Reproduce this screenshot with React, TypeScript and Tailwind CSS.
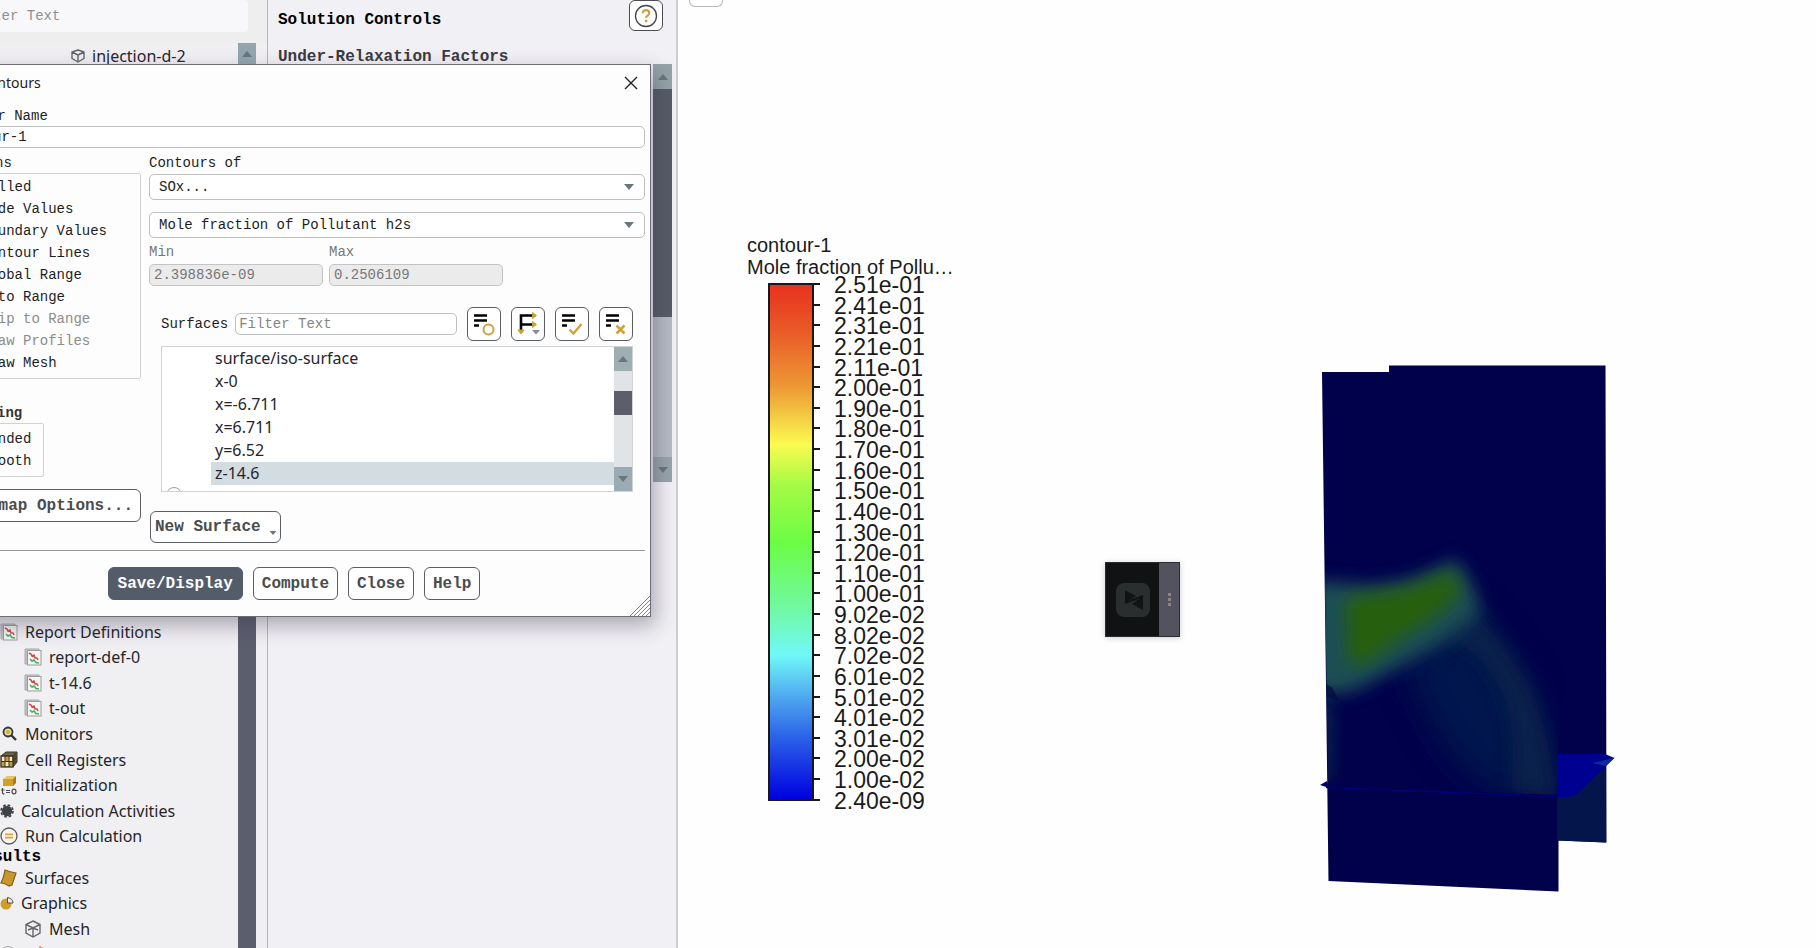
import type { ReactNode } from "react";

const mono = "font-['Liberation_Mono',monospace]";
const sans = "font-['Noto_Sans',sans-serif]";

const options = [
  { label: "Filled", checked: true },
  { label: "Node Values", checked: true },
  { label: "Boundary Values" },
  { label: "Contour Lines" },
  { label: "Global Range", checked: true },
  { label: "Auto Range", checked: true },
  { label: "Clip to Range", disabled: true },
  { label: "Draw Profiles", disabled: true },
  { label: "Draw Mesh" },
];

const surfaces = ["surface/iso-surface", "x-0", "x=-6.711", "x=6.711", "y=6.52", "z-14.6"];

const legend = [
  "2.51e-01", "2.41e-01", "2.31e-01", "2.21e-01", "2.11e-01", "2.00e-01", "1.90e-01",
  "1.80e-01", "1.70e-01", "1.60e-01", "1.50e-01", "1.40e-01", "1.30e-01", "1.20e-01",
  "1.10e-01", "1.00e-01", "9.02e-02", "8.02e-02", "7.02e-02", "6.01e-02", "5.01e-02",
  "4.01e-02", "3.01e-02", "2.00e-02", "1.00e-02", "2.40e-09",
];

function ReportIcon() {
  return (
    <svg viewBox="0 0 18 18" className="h-[18px] w-[18px] shrink-0">
      <path d="M1 1h14v2H3v13H1z" fill="#c9ccce" stroke="#a5a8aa" strokeWidth="1" />
      <rect x="3.5" y="2.5" width="13.5" height="14.5" fill="#f4f4f2" stroke="#9b9ea0" />
      <path d="M5 5l2 1 1 2 2-1 1 3 2 0 1 2" fill="none" stroke="#d2494b" strokeWidth="1.5" />
      <path d="M6 11l2 2 2-1 2 2.500 3 .5" fill="none" stroke="#3fb060" strokeWidth="1.5" />
    </svg>
  );
}

function MonitorIcon() {
  return (
    <svg viewBox="0 0 18 18" className="h-[18px] w-[18px] shrink-0">
      <circle cx="8" cy="7" r="4.500" fill="#e9dc9a" stroke="#333639" strokeWidth="1.800" />
      <circle cx="8" cy="7" r="2" fill="#d3ab35" />
      <path d="M11 10l5 5" stroke="#333639" strokeWidth="2.400" />
    </svg>
  );
}

function CellIcon() {
  return (
    <svg viewBox="0 0 18 18" className="h-[18px] w-[18px] shrink-0">
      <path d="M1 5l5-4h11l-4 4zM13 5l4-4v10l-4 5z" fill="#6c6446" stroke="#36342c" />
      <rect x="1" y="5" width="12" height="11" fill="#c79d2b" stroke="#36342c" strokeWidth="1.300" />
      <path d="M2 6h3v4H2zM9 6h3v4H9zM5 11h4v4H5z" fill="#efe8cc" />
      <path d="M5 5v11M9 5v11M1 10.500h12M15 3v10M13 10l4-4" fill="none" stroke="#36342c" />
    </svg>
  );
}

function InitIcon() {
  return (
    <svg viewBox="0 0 18 20" className="h-5 w-[18px] shrink-0">
      <path d="M3 4l4-3h9l-3 3z" fill="#e7c566" />
      <path d="M3 4h10v7H3z" fill="#d19f2b" />
      <path d="M13 4l3-3v7l-3 3z" fill="#a97c1a" />
      <path d="M2.500 13v5q0 1 2 .8M1 15h3.500M6 15.500h4M6 17.500h4" fill="none" stroke="#4d4d4d" strokeWidth="1.200" />
      <ellipse cx="14" cy="16.500" rx="2" ry="2.300" fill="none" stroke="#4d4d4d" strokeWidth="1.200" />
    </svg>
  );
}

function GearIcon() {
  return (
    <svg viewBox="0 0 14 14" className="h-[14px] w-[14px] shrink-0">
      <circle cx="7" cy="7" r="5.200" fill="#3d4247" />
      <circle cx="7" cy="7" r="6" fill="none" stroke="#3d4247" strokeWidth="1.600" strokeDasharray="2.700 2" />
    </svg>
  );
}

function RunIcon() {
  return (
    <svg viewBox="0 0 18 18" className="h-[18px] w-[18px] shrink-0">
      <circle cx="9" cy="9" r="8" fill="#f5f3ea" stroke="#55585c" strokeWidth="1.300" />
      <path d="M5 7.300h8M5 10.700h8" stroke="#d3a93a" strokeWidth="1.800" />
    </svg>
  );
}

function SurfaceIcon() {
  return (
    <svg viewBox="0 0 18 18" className="h-[18px] w-[18px] shrink-0">
      <path d="M5 1q5 2 11 3-2 6-4 12l-3 1Q5 14 1 14 4 8 5 1z" fill="#c8972b" stroke="#7c6220" strokeWidth="1.200" />
    </svg>
  );
}

function GraphicsIcon() {
  return (
    <svg viewBox="0 0 14 14" className="h-[14px] w-[14px] shrink-0">
      <circle cx="6" cy="8" r="5.500" fill="#cf9c2d" />
      <path d="M7.500 1.500V7H13q0-4.500-5.500-5.500z" fill="#f3eef0" stroke="#5b4a4a" />
    </svg>
  );
}

function MeshIcon({ className }: { className?: string }) {
  return (
    <svg viewBox="0 0 18 18" className={className ?? "h-[18px] w-[18px] shrink-0"}>
      <path
        d="M9 1l7 3.500v8.500l-7 4-7-4V4.500zM2 4.500l7 3.500 7-3.500M9 8v9M4 10l5-2 5 2"
        fill="none"
        stroke="#62666b"
        strokeWidth="1.400"
      />
    </svg>
  );
}

function BoxIcon() {
  return (
    <svg viewBox="0 0 16 14" className="h-[14px] w-4 shrink-0">
      <path
        d="M8 1l6 2v6.500L8 13 2 9.500V3zM2 3l6 3 6-3M8 6v7"
        fill="none"
        stroke="#62666b"
        strokeWidth="1.400"
        strokeLinejoin="round"
      />
    </svg>
  );
}

function ContourIcon() {
  return (
    <svg viewBox="0 0 18 18" className="h-[18px] w-[18px] shrink-0">
      <path d="M2 12l6-7 5 2-4 9z" fill="#e08a3a" stroke="#6d6d6d" />
      <path d="M12 1v3M14 2v2" stroke="#d2494b" />
    </svg>
  );
}

function Triangle({ up, className }: { up?: boolean; className?: string }) {
  return (
    <svg viewBox="0 0 10 6" className={className ?? "h-[6px] w-[10px]"}>
      <path d={up ? "M0 6L5 0l5 6z" : "M0 0l5 6 5-6z"} fill="#68777b" />
    </svg>
  );
}

function TreeItem({ icon, label, indent }: { icon: ReactNode; label: string; indent?: boolean }) {
  return (
    <li className={`flex flex-1 items-center gap-[7px] ${indent ? "pl-6" : ""}`}>
      {icon}
      <span>{label}</span>
    </li>
  );
}

function OutlineTree() {
  return (
    <aside className="flex w-[268px] shrink-0 flex-col border-r border-[#b4b4b8] bg-[#f0eff2]">
      <div className="h-[43px] shrink-0 bg-[#eeeeef]">
        <input
          aria-label="Filter tree"
          placeholder="Filter Text"
          className={`${mono} -ml-10 h-8 w-[288px] rounded-sm bg-[#f8f7f9] pl-2 text-[14px] text-[#333] placeholder:text-[#8f8f8f]`}
        />
      </div>
      <div className="flex flex-1">
        <div className={`${sans} flex flex-1 flex-col text-[16px] leading-5 text-[#26262a]`}>
          <div className="flex h-[26px] items-center gap-[6px] pl-[70px]">
            <BoxIcon />
            <span>injection-d-2</span>
          </div>
          <div className="h-[550px] shrink-0" />
          <ul className="flex h-[230px] flex-col">
            <TreeItem icon={<ReportIcon />} label="Report Definitions" />
            <TreeItem indent icon={<ReportIcon />} label="report-def-0" />
            <TreeItem indent icon={<ReportIcon />} label="t-14.6" />
            <TreeItem indent icon={<ReportIcon />} label="t-out" />
            <TreeItem icon={<MonitorIcon />} label="Monitors" />
            <TreeItem icon={<CellIcon />} label="Cell Registers" />
            <TreeItem icon={<InitIcon />} label="Initialization" />
            <TreeItem icon={<GearIcon />} label="Calculation Activities" />
            <TreeItem icon={<RunIcon />} label="Run Calculation" />
          </ul>
          <h2 className={`${mono} -ml-[26px] h-4 text-[16px] leading-4 font-bold text-black`}>Results</h2>
          <ul className="flex h-[102px] shrink-0 flex-col">
            <TreeItem icon={<SurfaceIcon />} label="Surfaces" />
            <TreeItem icon={<GraphicsIcon />} label="Graphics" />
            <TreeItem indent icon={<MeshIcon />} label="Mesh" />
            <li className="flex flex-1 items-center gap-3">
              <span className="h-4 w-4 rounded-full border border-[#a9a9ad]" />
              <ContourIcon />
              <span>Contours</span>
            </li>
          </ul>
        </div>
        <div className="mr-[11px] flex w-[18px] flex-col bg-[#5b5e6d]">
          <div className="flex h-[22px] items-center justify-center bg-[#93a5ae]">
            <Triangle up />
          </div>
        </div>
      </div>
    </aside>
  );
}

function TaskPage() {
  return (
    <section className="flex w-[410px] shrink-0 flex-col border-r-2 border-[#cdcdd1] bg-[#f1f0f4]">
      <div className={`${mono} flex h-16 shrink-0 justify-between pr-[13px] pl-[10px] text-[16px] font-bold`}>
        <div>
          <h1 className="pt-[10px] leading-5 text-black">Solution Controls</h1>
          <h2 className="pt-[17px] leading-5 text-[#3a3a40]">Under-Relaxation Factors</h2>
        </div>
        <button
          aria-label="Help"
          className="flex h-[31px] w-[34px] items-center justify-center rounded-md border border-[#4c4c55] bg-white"
        >
          <svg viewBox="0 0 24 24" className="h-6 w-6">
            <circle cx="12" cy="12" r="10.500" fill="#fff" stroke="#45454d" strokeWidth="1.300" />
            <path d="M8.800 9.200q.2-3 3.300-3t3.200 2.800q0 1.600-1.800 2.600-1.400.8-1.400 2.400" fill="none" stroke="#cfa23a" strokeWidth="2.200" />
            <circle cx="12.100" cy="17" r="1.400" fill="#cfa23a" />
          </svg>
        </button>
      </div>
      <div className="flex justify-end pr-1">
        <div className="flex h-[418px] w-[19px] flex-col bg-[#b4bcc3]">
          <div className="flex h-[25px] items-center justify-center bg-[#95a4a8]">
            <Triangle up />
          </div>
          <div className="h-[228px] bg-[#565c67]" />
          <div className="mt-auto flex h-[25px] items-center justify-center bg-[#98a4ab]">
            <Triangle />
          </div>
        </div>
      </div>
    </section>
  );
}

function Dropdown({ label, value }: { label: string; value: string }) {
  return (
    <div className="relative">
      <select
        aria-label={label}
        className="block h-[26px] w-full appearance-none rounded-[5px] border border-[#bcc0c0] bg-white px-[9px] text-[14px]"
      >
        <option>{value}</option>
      </select>
      <Triangle className="pointer-events-none absolute top-[10px] right-[11px] h-[6px] w-[10px]" />
    </div>
  );
}

function CheckItem({ label, checked, disabled }: { label: string; checked?: boolean; disabled?: boolean }) {
  return (
    <label className={`flex h-[22px] items-center gap-3 pl-3 ${disabled ? "text-[#8c8c8c]" : "text-[#1d1d1d]"}`}>
      <input type="checkbox" defaultChecked={checked} disabled={disabled} className="h-[13px] w-[13px]" />
      {label}
    </label>
  );
}

function ToolButton({ label, children }: { label: string; children: ReactNode }) {
  return (
    <button
      aria-label={label}
      className="flex h-[34px] w-[34px] shrink-0 items-center justify-center rounded-md border border-[#5b5e62] bg-white"
    >
      <svg viewBox="0 0 24 24" className="h-6 w-6" fill="none">
        {children}
      </svg>
    </button>
  );
}

const listLines = "M2 3.500h13M2 8.500h13M2 13.500h5";

function ContoursDialog() {
  return (
    <div
      role="dialog"
      aria-label="Contours"
      className={`${mono} absolute top-16 left-[-60px] z-10 w-[711px] border border-[#6e6e72] bg-[#fdfdfd] text-[14px] leading-5 text-[#1d1d1d] shadow-[4px_8px_20px_rgba(60,50,80,0.4)]`}
    >
      <div className={`${sans} flex items-center justify-between pt-2 pr-3 pb-[13px] pl-[39px]`}>
        <span>Contours</span>
        <button aria-label="Close window" className="flex h-[14px] w-[14px]">
          <svg viewBox="0 0 14 14" className="h-[14px] w-[14px]">
            <path d="M1 1l12 12M13 1L1 13" stroke="#222" strokeWidth="1.400" />
          </svg>
        </button>
      </div>

      <div className="pr-[5px] pl-[2px]">
        <label htmlFor="contour-name" className="block pl-1">
          Contour Name
        </label>
        <input
          id="contour-name"
          defaultValue="contour-1"
          className="block h-[22px] w-full rounded-[5px] border border-[#bcc0c0] bg-white px-[7px]"
        />

        <div className="flex gap-2 pt-[5px]">
          <div className="w-[198px] shrink-0">
            <div className="pl-[10px]">Options</div>
            <div className="rounded-xs border border-[#d2d2d4] pt-[2px] pb-1">
              {options.map((o) => (
                <CheckItem key={o.label} {...o} />
              ))}
            </div>
            <div className="pt-6 pl-3 font-bold text-[#333]">Coloring</div>
            <div className="w-[101px] rounded-xs border border-[#d2d2d4] py-1">
              <CheckItem label="Banded" />
              <CheckItem label="Smooth" checked />
            </div>
            <button className="mt-3 block h-[33px] w-full rounded-md border border-[#5b5e62] bg-white pr-[7px] text-right text-[16px] font-bold text-[#4c4c4c]">
              Colormap Options...
            </button>
          </div>

          <div className="min-w-0 flex-1">
            <div className="pb-px">Contours of</div>
            <Dropdown label="Contours of" value="SOx..." />
            <div className="h-3" />
            <Dropdown label="Variable" value="Mole fraction of Pollutant h2s" />

            <div className="flex gap-[6px] pt-1 text-[#777]">
              <label className="w-[174px]">
                <span className="block pb-[2px]">Min</span>
                <input
                  disabled
                  value="2.398836e-09"
                  className="block h-[22px] w-full rounded-[5px] border border-[#c3c3c5] bg-[#ebebec] px-1"
                />
              </label>
              <label className="w-[174px]">
                <span className="block pb-[2px]">Max</span>
                <input
                  disabled
                  value="0.2506109"
                  className="block h-[22px] w-full rounded-[5px] border border-[#c3c3c5] bg-[#ebebec] px-1"
                />
              </label>
            </div>

            <div className="flex items-center gap-[10px] px-3 pt-[21px]">
              <label className="flex min-w-0 flex-1 items-center gap-[7px]">
                Surfaces
                <input
                  placeholder="Filter Text"
                  className="h-[22px] min-w-0 flex-1 rounded-[5px] border border-[#bcc0c0] bg-white px-[3px] placeholder:text-[#858585]"
                />
              </label>
              <ToolButton label="Highlight surfaces">
                <path d={listLines} stroke="#000" strokeWidth="2.400" />
                <circle cx="16.500" cy="17.500" r="5" stroke="#cfa23a" strokeWidth="2" />
              </ToolButton>
              <ToolButton label="Group by">
                <path d="M5 20V3.500h12M5 12.500h12" stroke="#000" strokeWidth="2.600" />
                <path d="M16.500 .5l4 3-4 3zM16.500 9.500l4 3-4 3zM2 18h6l-3 4z" fill="#c2a532" stroke="#c2a532" />
                <path d="M16 18h8l-4 4.500z" fill="#8b8b93" />
              </ToolButton>
              <ToolButton label="Select all">
                <path d={listLines} stroke="#000" strokeWidth="2.400" />
                <path d="M9.500 17.500l4 4 8-9.500" stroke="#cfa23a" strokeWidth="2.400" />
              </ToolButton>
              <ToolButton label="Deselect all">
                <path d={listLines} stroke="#000" strokeWidth="2.400" />
                <path d="M12.500 13.500l8 8M20.500 13.500l-8 8" stroke="#cfa23a" strokeWidth="2.600" />
              </ToolButton>
            </div>

            <div className="mx-3 mt-[5px] flex h-[146px] overflow-hidden border border-[#d0d4d6] bg-white">
              <ul className={`${sans} relative flex-1 pl-[49px] text-[16px] leading-[23px] text-[#25252b]`}>
                {surfaces.map((s) => (
                  <li key={s} className={s === "z-14.6" ? "bg-[#d3dce1] pl-1" : "pl-1"}>
                    {s}
                  </li>
                ))}
                <li className="absolute -bottom-3 left-1 h-4 w-4 rounded-full border border-[#9c9c9c]" />
              </ul>
              <div className="flex w-[18px] flex-col bg-[#e0e4e6]">
                <div className="flex h-6 items-center justify-center bg-[#9dafb0]">
                  <Triangle up />
                </div>
                <div className="mt-5 h-6 bg-[#5c5f6b]" />
                <div className="mt-auto flex h-6 items-center justify-center bg-[#9babb4]">
                  <Triangle />
                </div>
              </div>
            </div>

            <button className="mt-[19px] ml-px flex h-8 w-[131px] items-center gap-2 rounded-md border border-[#5b5e62] bg-white pl-1 text-[16px] font-bold text-[#4c4c4c]">
              New Surface
              <Triangle className="mt-3 h-1 w-2" />
            </button>
          </div>
        </div>

        <div className="mt-[7px] border-t border-[#97979b]" />
        <div className="flex justify-center gap-[10px] py-4 text-[16px] font-bold text-[#4c4c4c]">
          <button className="h-[33px] rounded-md border border-[#545c69] bg-[#545c69] px-[9px] text-white">
            Save/Display
          </button>
          <button className="h-[33px] rounded-md border border-[#5b5e62] bg-white px-2">Compute</button>
          <button className="h-[33px] rounded-md border border-[#5b5e62] bg-white px-2">Close</button>
          <button className="h-[33px] rounded-md border border-[#5b5e62] bg-white px-2">Help</button>
        </div>
      </div>

      <svg viewBox="0 0 20 20" className="absolute right-0 bottom-0 h-5 w-5">
        <path d="M0 20L20 0M4 20L20 4M8 20L20 8M12 20l8-8M16 20l4-4" stroke="#85858a" strokeWidth="1" />
      </svg>
    </div>
  );
}

function Legend() {
  return (
    <div className="w-[206px] shrink-0 pt-[234px] font-['Liberation_Sans',Arial,sans-serif] text-[#1b1b1b]">
      <div className="text-[20px] leading-[22px] whitespace-nowrap">
        <div>contour-1</div>
        <div>Mole fraction of Pollu…</div>
      </div>
      <div className="flex pl-[21px]">
        <div className="mt-[5px] h-[518px] w-[46px] border-2 border-[#191919] bg-[linear-gradient(#e8321f,#ea5a28_9%,#ed9a34_20%,#fbfb50_31%,#a4fb45_39%,#6cfc44_50%,#70f99a_62%,#70f8f8_72%,#4ba0ee_81%,#2b62e8_88%,#0000e0)]" />
        <div className="mt-[5px] flex h-[518px] w-[6px] flex-col justify-between">
          {legend.map((v) => (
            <div key={v} className="h-[2px] bg-[#191919]" />
          ))}
        </div>
        <ul className="-mt-[3px] ml-[14px] flex h-[536px] flex-col justify-between text-[23px] leading-5">
          {legend.map((v) => (
            <li key={v}>{v}</li>
          ))}
        </ul>
      </div>
    </div>
  );
}

function ContourPlot() {
  return (
    <svg viewBox="1318 360 300 540" className="mt-[361px] h-[540px] w-[300px] shrink-0">
      <defs>
        <filter id="soft" x="-50%" y="-50%" width="200%" height="200%">
          <feGaussianBlur stdDeviation="9" />
        </filter>
        <filter id="fine" x="-50%" y="-50%" width="200%" height="200%">
          <feGaussianBlur stdDeviation="8" />
        </filter>
        <filter id="haze" x="-50%" y="-50%" width="200%" height="200%">
          <feGaussianBlur stdDeviation="16" />
        </filter>
        <clipPath id="front">
          <path d="M1322 371h67v-6.500h216L1558 750V794L1328 786z" />
        </clipPath>
      </defs>
      <path d="M1389 364.500h216.500l1 477-48-2V890.500L1328.500 880 1322 371h67z" fill="#00004b" />
      <path d="M1557 797l49-31v75.500l-49-2z" fill="#03154b" />
      <g clipPath="url(#front)">
        <path d="M1400 670L1470 600Q1515 650 1535 690 1555 740 1562 800L1490 790Q1440 760 1420 700z" fill="#06204e" opacity=".65" filter="url(#haze)" />
        <path d="M1462 590Q1505 640 1530 685 1548 725 1558 800L1510 790Q1520 720 1495 680 1480 650 1450 640z" fill="#08264c" opacity=".75" filter="url(#soft)" />
        <path d="M1312 580l58 4 38-5 48-21 16 24 8 28-34 30-42 23-48 26-44 8z" fill="#1d5054" filter="url(#soft)" />
        <path d="M1346 597l54-8 54-18 6 22-28 25-34 20-34 26-16-5z" fill="#285e08" filter="url(#fine)" />
        <path d="M1320 690l15 20-2 70h-13z" fill="#0a2c50" opacity=".8" filter="url(#fine)" />
      </g>
      <path d="M1326 683l6 3 7 14-12-4z" fill="#00063f" opacity=".6" />
      <path d="M1558 753h47l9.500 4-9.500 9-28 27q-8 4-19 3z" fill="#000090" />
      <path d="M1592 762l22-5-8 8z" fill="#0c2a9a" />
      <path d="M1320 784l7-4 2 7z" fill="#00006e" />
      <path d="M1326 786.500l232 9" stroke="#000078" strokeWidth="1.400" />
    </svg>
  );
}

function GraphicsWindow() {
  return (
    <main className="relative flex min-w-0 flex-1 items-start justify-between bg-[#fefefe] pr-[198px] pl-[69px]">
      <div className="absolute top-0 left-[11px] h-[7px] w-[34px] rounded-b-md border border-t-0 border-[#b9b9b9] bg-white" />
      <Legend />
      {/* floating recorder badge */}
      <div className="absolute top-[562px] left-[427px] flex h-[75px] w-[75px] border border-[#2c2d33] shadow-[0_1px_6px_rgba(0,0,0,0.2)]">
        <div className="flex flex-1 items-center justify-center bg-[#101214]">
          <svg viewBox="0 0 36 36" className="h-9 w-9">
            <rect x="1" y="1" width="34" height="34" rx="8" fill="#2a2e2f" />
            <path d="M10 8l11 6-11 7zM28 14v14l-11-6z" fill="#111315" />
            <path d="M10 21L28 14" stroke="#111315" strokeWidth="2" />
          </svg>
        </div>
        <div className="flex w-5 flex-col items-center justify-center gap-[2px] bg-[#53535f]">
          <span className="h-[3px] w-[3px] bg-[#94827f]" />
          <span className="h-[3px] w-[3px] bg-[#94827f]" />
          <span className="h-[3px] w-[3px] bg-[#94827f]" />
        </div>
      </div>
      <ContourPlot />
    </main>
  );
}

export default function App() {
  return (
    <div className="relative flex h-screen overflow-hidden">
      <OutlineTree />
      <TaskPage />
      <GraphicsWindow />
      <ContoursDialog />
    </div>
  );
}
